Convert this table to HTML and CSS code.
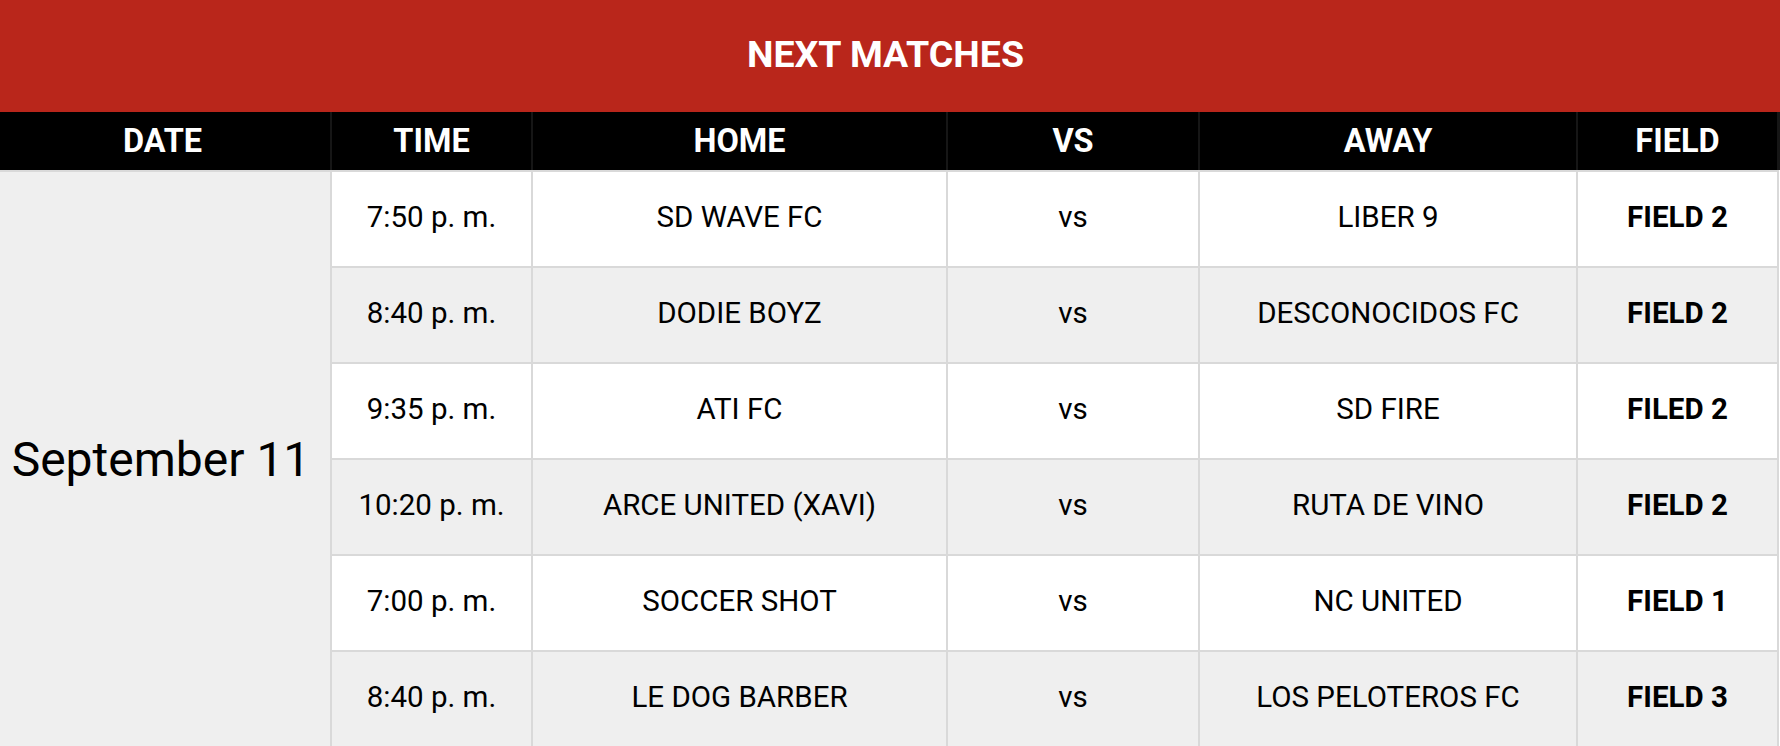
FILE: index.html
```html
<!DOCTYPE html>
<html lang="en">
<head>
<meta charset="utf-8">
<title>Next Matches</title>
<link rel="stylesheet" href="styles.css">
</head>
<body>
<section class="schedule">
  <h1 class="title">NEXT MATCHES</h1>
  <div class="head">
    <div class="hcell hdate">DATE</div>
    <div class="hcell">TIME</div>
    <div class="hcell">HOME</div>
    <div class="hcell">VS</div>
    <div class="hcell">AWAY</div>
    <div class="hcell">FIELD</div>
  </div>
  <div class="body">
    <div class="date">September 11</div>
    <div class="match">
      <div class="cell">7:50 p. m.</div>
      <div class="cell">SD WAVE FC</div>
      <div class="cell">vs</div>
      <div class="cell">LIBER 9</div>
      <div class="cell field">FIELD 2</div>
    </div>
    <div class="match alt">
      <div class="cell">8:40 p. m.</div>
      <div class="cell">DODIE BOYZ</div>
      <div class="cell">vs</div>
      <div class="cell">DESCONOCIDOS FC</div>
      <div class="cell field">FIELD 2</div>
    </div>
    <div class="match">
      <div class="cell">9:35 p. m.</div>
      <div class="cell">ATI FC</div>
      <div class="cell">vs</div>
      <div class="cell">SD FIRE</div>
      <div class="cell field">FILED 2</div>
    </div>
    <div class="match alt">
      <div class="cell">10:20 p. m.</div>
      <div class="cell">ARCE UNITED (XAVI)</div>
      <div class="cell">vs</div>
      <div class="cell">RUTA DE VINO</div>
      <div class="cell field">FIELD 2</div>
    </div>
    <div class="match">
      <div class="cell">7:00 p. m.</div>
      <div class="cell">SOCCER SHOT</div>
      <div class="cell">vs</div>
      <div class="cell">NC UNITED</div>
      <div class="cell field">FIELD 1</div>
    </div>
    <div class="match alt">
      <div class="cell">8:40 p. m.</div>
      <div class="cell">LE DOG BARBER</div>
      <div class="cell">vs</div>
      <div class="cell">LOS PELOTEROS FC</div>
      <div class="cell field">FIELD 3</div>
    </div>
  </div>
</section>
</body>
</html>
```

FILE: styles.css
```css
html, body {
  margin: 0;
  padding: 0;
  background: #ffffff;
}

body {
  font-family: Roboto, "Liberation Sans", Arial, sans-serif;
  color: #000;
  width: 1780px;
  height: 746px;
  overflow: hidden;
}

.schedule {
  display: flex;
  flex-direction: column;
}

.title {
  margin: 0;
  height: 112px;
  box-sizing: border-box;
  padding-bottom: 5px;
  padding-right: 9px;
  background: #b9261b;
  color: #ffffff;
  font-size: 37.5px;
  font-weight: 700;
  display: flex;
  align-items: center;
  justify-content: center;
}

.head {
  display: grid;
  grid-template-columns: 330px 199px 413px 250px 376px 199px;
  column-gap: 2px;
  background: #161616;
  height: 58px;
  padding-right: 3px;
}

.hcell {
  background: #000;
  color: #fff;
  font-weight: 700;
  font-size: 32.5px;
  display: flex;
  align-items: center;
  justify-content: center;
}

.hcell.hdate {
  padding-right: 5px;
}

.body {
  display: grid;
  grid-template-columns: 330px 199px 413px 250px 376px 199px;
  grid-auto-rows: 94px;
  gap: 2px;
  background: #d9d9d9;
  padding-top: 2px;
  padding-right: 2px;
  width: 1777px;
}

.date {
  grid-row: span 6;
  background: #efefef;
  font-size: 48px;
  display: flex;
  align-items: center;
  justify-content: center;
  padding-right: 8px;
}

.match {
  display: contents;
}

.cell {
  background: #ffffff;
  font-size: 29.5px;
  display: flex;
  align-items: center;
  justify-content: center;
  padding-bottom: 4px;
}

.match.alt .cell {
  background: #efefef;
}

.cell.field {
  font-weight: 700;
}
```
